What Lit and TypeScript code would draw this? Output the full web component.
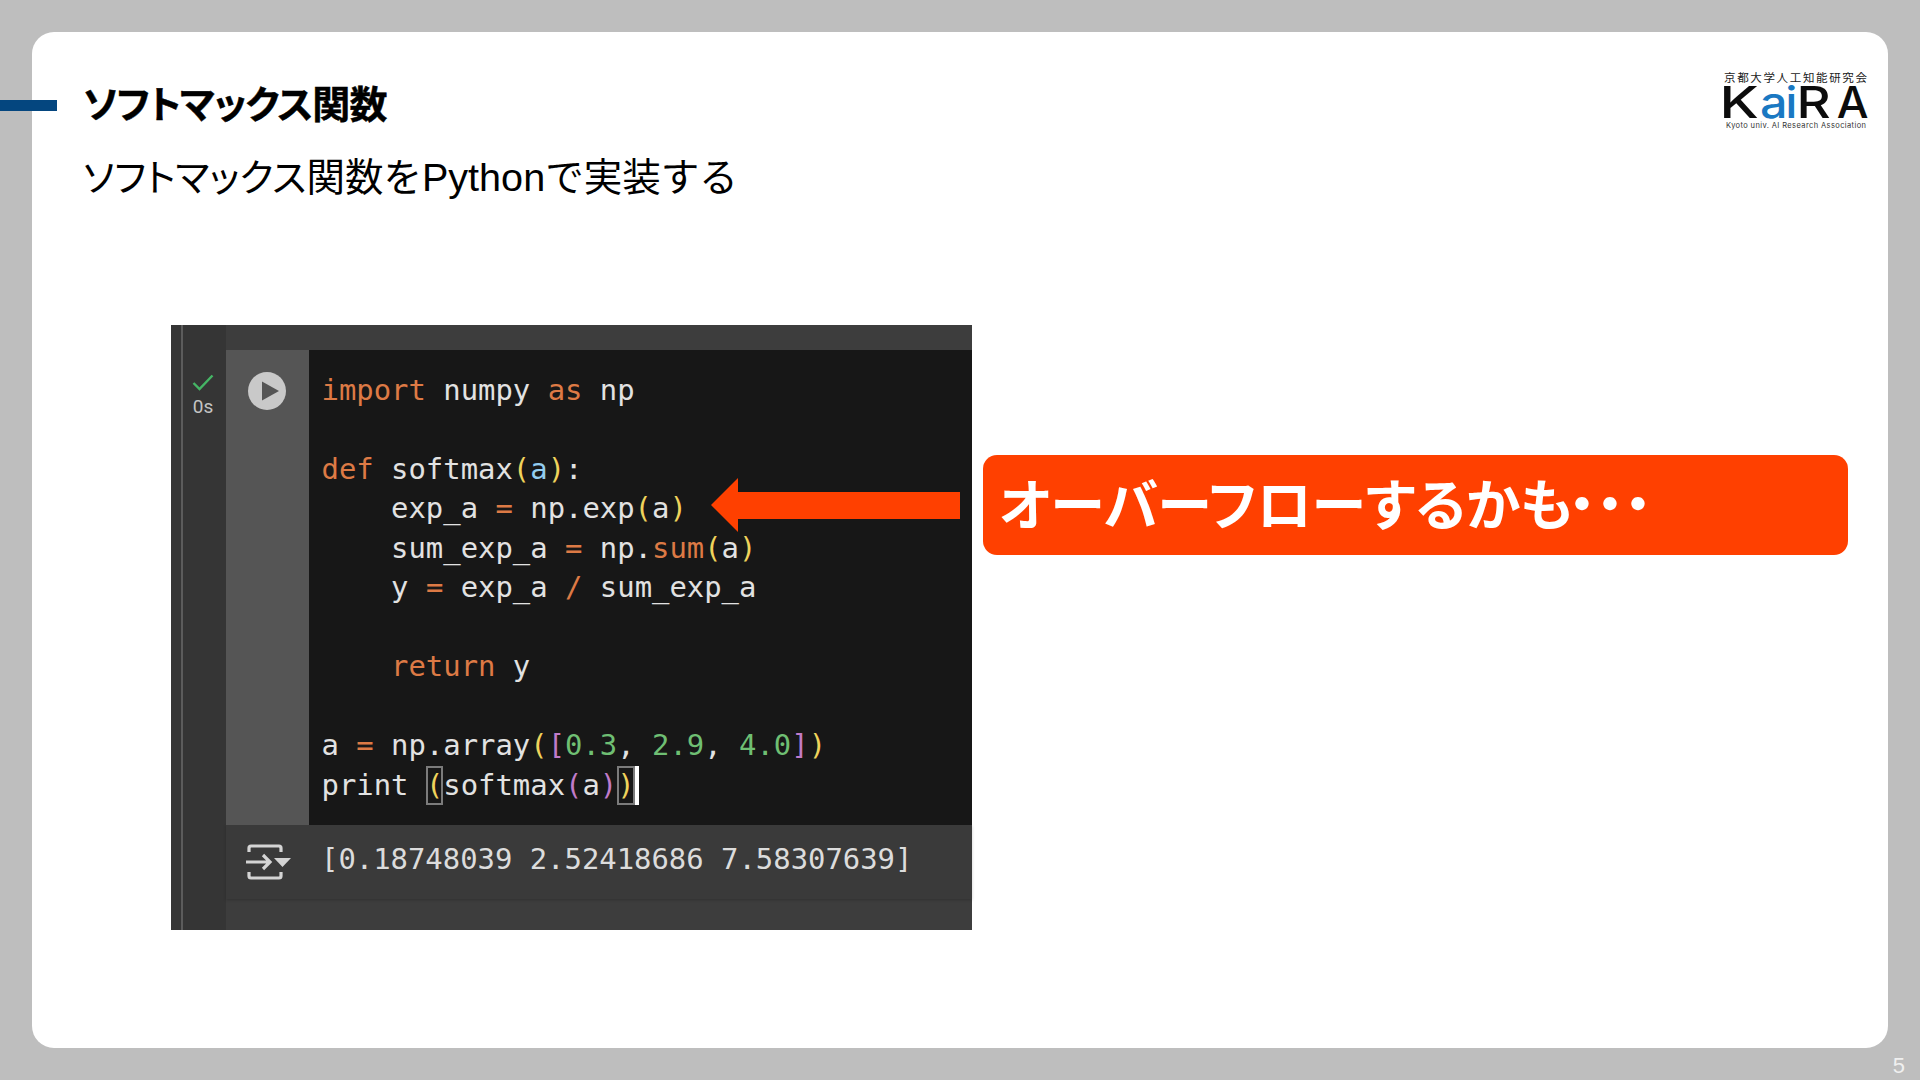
import { LitElement, html, css } from "lit";
import { customElement } from "lit/decorators.js";

@customElement("app-root")
export class AppRoot extends LitElement {
  static styles = css`
    :host { display: block; width: 1920px; height: 1080px; overflow: hidden; background: #bebebe;
      font-family: "Liberation Sans", "Noto Sans CJK JP", sans-serif; }
    .page { padding: 32px 32px 0; box-sizing: border-box; height: 1080px; }
    .card { position: relative; height: 1016px; background: #fff; border-radius: 22px; box-sizing: border-box; padding: 45px 0 0 51px; }
    .bar { position: absolute; left: -32px; top: 68px; width: 57px; height: 11px; background: #04467f; }
    h1 { margin: 0; font-size: 38px; line-height: 56px; font-weight: 700; color: #000; font-feature-settings: "palt"; height: 56px; letter-spacing: -0.9px; -webkit-text-stroke: 0.5px #000; }
    .sub { margin: 16px 0 0; font-size: 38.5px; line-height: 56px; color: #000; }
    .kata { font-feature-settings: "palt"; font-size: 38px; }
    .latin { font-size: 39.6px; }
    .logo { position: absolute; right: 20px; top: 37px; width: 146px; height: 66px; }
    .logo svg { display: block; overflow: visible; }
    .l1 { font-family: "Noto Sans CJK JP", sans-serif; font-size: 11.5px; fill: #222; }
    .l2 { font-family: "Inter", "Liberation Sans", sans-serif; font-size: 44px; font-weight: 500; fill: #0c0c0c; }
    .l2.b { fill: #1a78c2; }
    .l3 { font-family: "Inter", sans-serif; font-size: 7.5px; fill: #333; }
    .row { display: flex; align-items: flex-start; margin: 119px 0 0 88px; position: relative; }
    .nb { width: 801px; height: 605px; flex: none; background: linear-gradient(90deg, #353535 0, #353535 55px, #3d3d3d 55px); box-sizing: border-box; padding: 25px 0 30px 55px; position: relative; }
    .stripe { position: absolute; left: 10px; top: 0; bottom: 0; width: 2px; background: #5c5c5c; }
    .status { position: absolute; left: 0; top: 49px; width: 64px; display: flex; flex-direction: column; align-items: center; gap: 4px; font: 19px "Roboto", sans-serif; color: #c4c4c4; }
    .cell { display: flex; height: 475px; }
    .run { width: 83px; background: #555; flex: none; box-sizing: border-box; padding: 22px 0 0 22px; }
    pre { margin: 0; flex: 1; background: #171717; color: #e2e2e2; padding: 21px 0 0 12.5px; font: 28.9px/39.45px "DejaVu Sans Mono", monospace; }
    .k { color: #dd7a45; }
    .y { color: #efd35c; }
    .p { color: #c17bc9; }
    .n { color: #6fbf73; }
    .v { color: #93cdf0; }
    .m { outline: 2px solid #7b7b7b; outline-offset: -2px; padding: 2px 0 3px; }
    .c { box-shadow: 4px 0 0 #fff; }
    .out { display: flex; align-items: center; height: 74px; background: #3a3a3a; box-shadow: 0 1px 3px rgba(0,0,0,.2); }
    .out svg { margin-left: 19px; flex: none; }
    .out span { margin: -6px 0 0 30px; font: 28.9px "DejaVu Sans Mono", monospace; color: #dcdcdc; }
    .arrow { position: absolute; left: 540px; top: 153px; }
    .arrow svg { display: block; }
    .call { margin: 130px 0 0 11px; width: 865px; height: 100px; background: #ff4000; border-radius: 14px; color: #fff; font-weight: 700; font-size: 55px; line-height: 92px; box-sizing: border-box; padding-left: 16px; font-feature-settings: "palt"; white-space: nowrap; font-family: "Noto Sans CJK JP", sans-serif; }
    .dots { font-size: 68px; line-height: 0; letter-spacing: -6px; vertical-align: -5px; font-feature-settings: normal; margin-left: -8px; }
    .num { text-align: right; margin-right: -17px; padding-top: 6px; color: #f0f0f0; font-size: 22px; line-height: 24px; }
  `;
  render() {
    return html`<div class="page">
      <div class="card">
        <div class="bar"></div>
        <h1>ソフトマックス関数</h1>
        <p class="sub"><span class="kata">ソフトマックス</span>関数を<span class="latin">Python</span>で実装する</p>
        <div class="logo">
          <svg width="146" height="66" viewBox="0 0 146 66">
            <text class="l1" x="2" y="13" textLength="143">京都大学人工知能研究会</text>
            <text class="l2" x="-2" y="49" transform="scale(1.3 1)">K</text>
            <text class="l2 b" y="49" transform="scale(1.1 1)"><tspan x="34.5">a</tspan><tspan x="57.5">i</tspan></text>
            <text class="l2" x="62" y="49" transform="scale(1.2 1)">R</text>
            <text class="l2" x="112.5" y="49" transform="scale(1.02 1)">A</text>
            <text class="l3" x="4" y="59" textLength="140">Kyoto univ. AI Research Association</text>
          </svg>
        </div>
        <div class="row">
          <div class="nb">
            <div class="stripe"></div>
            <div class="status">
              <svg width="22" height="17" viewBox="0 0 22 17"><path d="M1.5 9 L7.5 15 L20.5 1.5" fill="none" stroke="#45b565" stroke-width="2.4"/></svg>
              <span>0s</span>
            </div>
            <div class="cell">
              <div class="run">
                <svg width="38" height="38" viewBox="0 0 38 38"><circle cx="19" cy="19" r="19" fill="#c9c9c9"/><path d="M14 9.5 L31 19 L14 28.5 Z" fill="#555"/></svg>
              </div>
<pre><span class="k">import</span> numpy <span class="k">as</span> np

<span class="k">def</span> softmax<span class="y">(</span><span class="v">a</span><span class="y">)</span>:
    exp_a <span class="k">=</span> np.exp<span class="y">(</span>a<span class="y">)</span>
    sum_exp_a <span class="k">=</span> np.<span class="k">sum</span><span class="y">(</span>a<span class="y">)</span>
    y <span class="k">=</span> exp_a <span class="k">/</span> sum_exp_a

    <span class="k">return</span> y

a <span class="k">=</span> np.array<span class="y">(</span><span class="p">[</span><span class="n">0.3</span>, <span class="n">2.9</span>, <span class="n">4.0</span><span class="p">]</span><span class="y">)</span>
print <span class="y m">(</span>softmax<span class="p">(</span>a<span class="p">)</span><span class="y m c">)</span></pre>
            </div>
            <div class="out">
              <svg width="46" height="36" viewBox="0 0 46 36" fill="none" stroke="#d4d4d4" stroke-width="3.2">
                <path d="M4 8 V4 Q4 2 6 2 H34 Q36 2 36 4 V8"/>
                <path d="M1 18 H25 M18 11 L25 18 L18 25"/>
                <path d="M4 28 V32 Q4 34 6 34 H34 Q36 34 36 32 V28"/>
                <path d="M29 14 H46 L37.5 23 Z" fill="#d4d4d4" stroke="none"/>
              </svg>
              <span>[0.18748039 2.52418686 7.58307639]</span>
            </div>
          </div>
          <div class="arrow">
            <svg width="249" height="54" viewBox="0 0 249 54"><path d="M0 27 L27 0 V14 H249 V41 H27 V54 Z" fill="#ff4000"/></svg>
          </div>
          <div class="call">オーバーフローするかも<span class="dots">･･･</span></div>
        </div>
      </div>
      <div class="num">5</div>
    </div>`;
  }
}
